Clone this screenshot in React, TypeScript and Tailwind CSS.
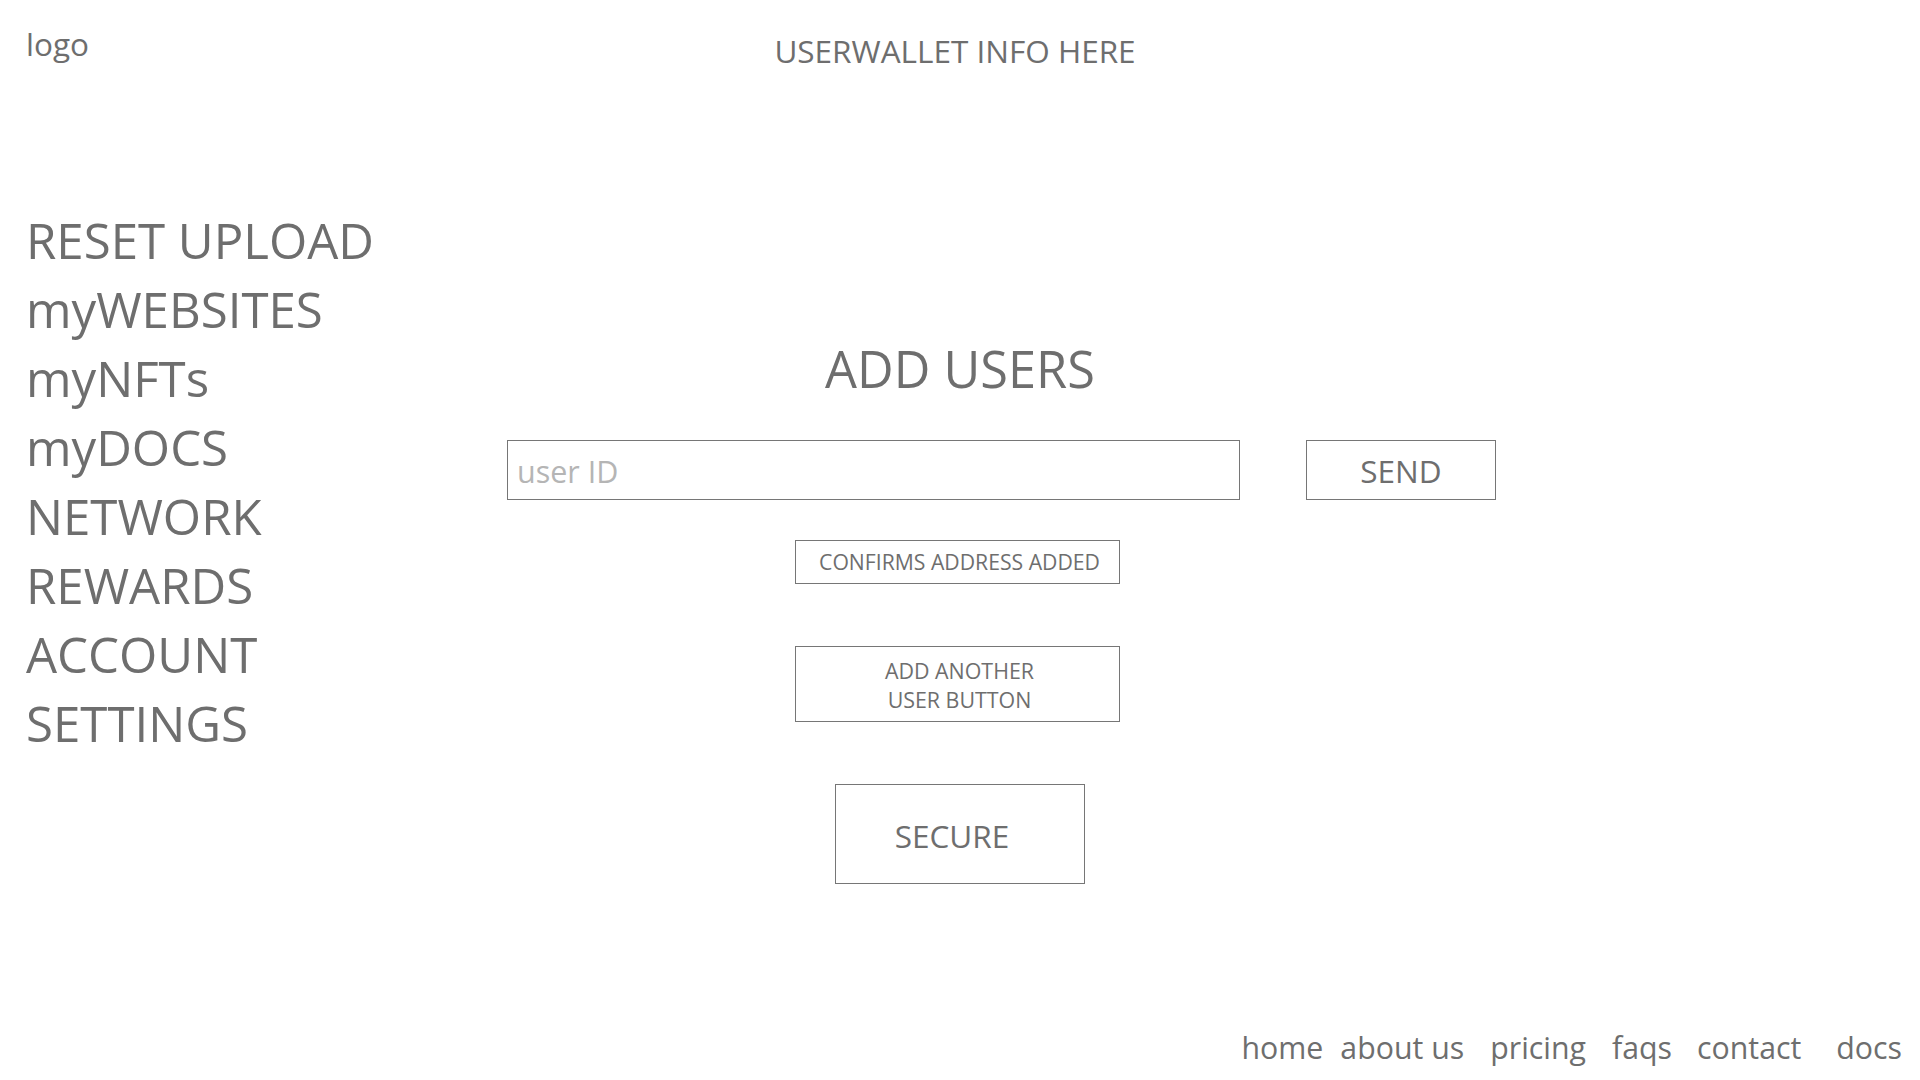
import React from 'react';

const navItems = ['RESET UPLOAD', 'myWEBSITES', 'myNFTs', 'myDOCS', 'NETWORK', 'REWARDS', 'ACCOUNT', 'SETTINGS'];

// footer links with the left spacing seen in the mockup
const footerLinks = [
  { label: 'home', ml: 'ml-0' },
  { label: 'about us', ml: 'ml-[17px]' },
  { label: 'pricing', ml: 'ml-[26px]' },
  { label: 'faqs', ml: 'ml-[26px]' },
  { label: 'contact', ml: 'ml-[25px]' },
  { label: 'docs', ml: 'ml-[35px]' },
];

const App: React.FC = () => {
  return (
    <div className="w-[1920px] h-[1080px] bg-white text-[#6e6e6e] flex flex-col font-['Open_Sans',sans-serif] overflow-hidden">
      {/* Header */}
      <header className="grid grid-cols-[1fr_auto_1fr] items-start px-[26px] pt-[22px]">
        <div className="text-[31.5px] leading-[44px]">logo</div>
        <div className="text-[31.5px] leading-[44px] mt-[7px] mr-[10px]">USERWALLET INFO HERE</div>
        <div />
      </header>

      <div className="flex flex-1">
        {/* Sidebar */}
        <nav className="w-[400px] shrink-0 pl-[26px] pt-[132px] flex flex-col">
          {navItems.map(item => (
            <a key={item} className="text-[49.2px] leading-[69px] whitespace-nowrap cursor-pointer">{item}</a>
          ))}
        </nav>

        {/* Main */}
        <main className="flex-1 mr-[400px] flex flex-col items-center pt-[266px]">
          <h1 className="text-[50.5px] leading-[60px]">ADD USERS</h1>

          <div className="self-start ml-[107px] mt-[41px] flex items-center gap-[66px]">
            <input
              placeholder="user ID"
              className="w-[733px] h-[60px] border border-[#767676] pl-[9px] pt-[2px] text-[30.5px] text-[#6e6e6e] outline-none placeholder:text-[#b5b5b5]"
            />
            <button className="w-[190px] h-[60px] border border-[#767676] pt-[2px] text-[31.5px]">SEND</button>
          </div>

          <div className="mt-[40px] -ml-[6px] w-[325px] h-[44px] border border-[#767676] pl-[5px] flex items-center justify-center text-[21.2px]">
            CONFIRMS ADDRESS ADDED
          </div>

          <button className="mt-[62px] -ml-[6px] w-[325px] h-[76px] border border-[#767676] pt-[2px] pl-[5px] flex flex-col items-center justify-center text-[21.4px] leading-[29px]">
            <span>ADD ANOTHER</span>
            <span>USER BUTTON</span>
          </button>

          <button className="mt-[62px] w-[250px] h-[100px] border border-[#767676] pt-[4px] pr-[16px] text-[31.5px]">SECURE</button>
        </main>
      </div>

      {/* Footer */}
      <footer className="flex justify-end pr-[18px] pb-[12px]">
        {footerLinks.map(l => (
          <a key={l.label} className={`${l.ml} text-[30.3px] leading-[40px] cursor-pointer`}>{l.label}</a>
        ))}
      </footer>
    </div>
  );
};

export default App;
